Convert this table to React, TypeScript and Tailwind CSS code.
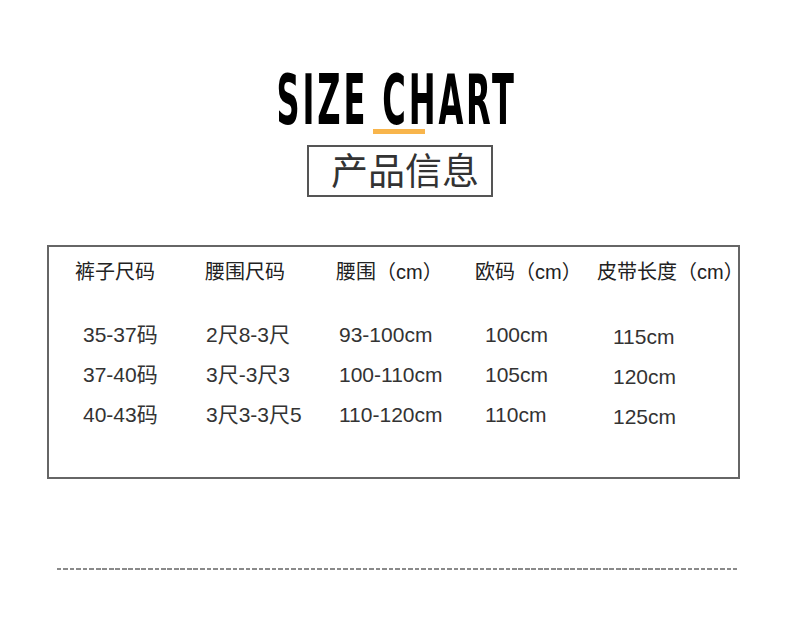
const headers = ["裤子尺码", "腰围尺码", "腰围（cm）", "欧码（cm）", "皮带长度（cm）"];

const rows = [
  ["35-37码", "2尺8-3尺", "93-100cm", "100cm", "115cm"],
  ["37-40码", "3尺-3尺3", "100-110cm", "105cm", "120cm"],
  ["40-43码", "3尺3-3尺5", "110-120cm", "110cm", "125cm"],
];

// per-column nudge of the data cells, taken from the picture
const cellPad = ["pl-[8px]", "pl-[1px]", "pl-[3px]", "pl-[10px]", "pl-[16px] pt-[2px]"];

export default function App() {
  return (
    <div
      className="w-[790px] h-[641px] bg-white flex flex-col items-center text-[#333]"
      style={{ fontFamily: '"Liberation Sans", "Noto Sans CJK SC", sans-serif' }}
    >
      <div className="mt-[72px] h-[56px] flex justify-center ml-[4px]">
        <h1
          className="text-[70px] leading-[56px] font-bold tracking-[0.08em] text-black scale-x-[0.51] whitespace-nowrap"
          style={{ fontFamily: '"Liberation Sans Narrow", "DejaVu Sans Condensed", "Liberation Sans", sans-serif' }}
        >
          SIZE CHART
        </h1>
      </div>

      <div className="mt-[1px] ml-[8px] w-[52px] h-[5px] bg-[#f8b54c]" />

      <div className="mt-[11px] ml-[10px] w-[186px] h-[52px] border-2 border-[#555] flex items-center justify-center">
        <span className="ml-[10px] mb-[3px] text-[37px] leading-none text-[#333]" style={{ fontFamily: '"Noto Sans CJK SC", sans-serif' }}>
          产品信息
        </span>
      </div>

      <div className="mt-[48px] self-start ml-[47px] w-[693px] h-[234px] border-2 border-[#666] pt-[13px] pl-[26px]">
        <div className="grid grid-cols-[130px_131px_139px_122px_1fr] text-[20px] leading-[24px] text-[#222]">
          {headers.map((h) => (
            <div key={h} className="whitespace-nowrap">{h}</div>
          ))}
        </div>

        <div className="mt-[39px] grid grid-cols-[130px_131px_139px_122px_1fr] gap-y-[16px] text-[21px] leading-[24px] text-[#333]">
          {rows.map((r, i) =>
            r.map((c, j) => (
              <div key={`${i}-${j}`} className={`h-[24px] whitespace-nowrap ${cellPad[j]}`}>
                {c}
              </div>
            ))
          )}
        </div>
      </div>

      <div className="mt-[89px] self-start ml-[57px] w-[680px] h-[2px] bg-[repeating-linear-gradient(to_right,#8a8a8a_0_4.5px,transparent_4.5px_6.5px)]" />
    </div>
  );
}
